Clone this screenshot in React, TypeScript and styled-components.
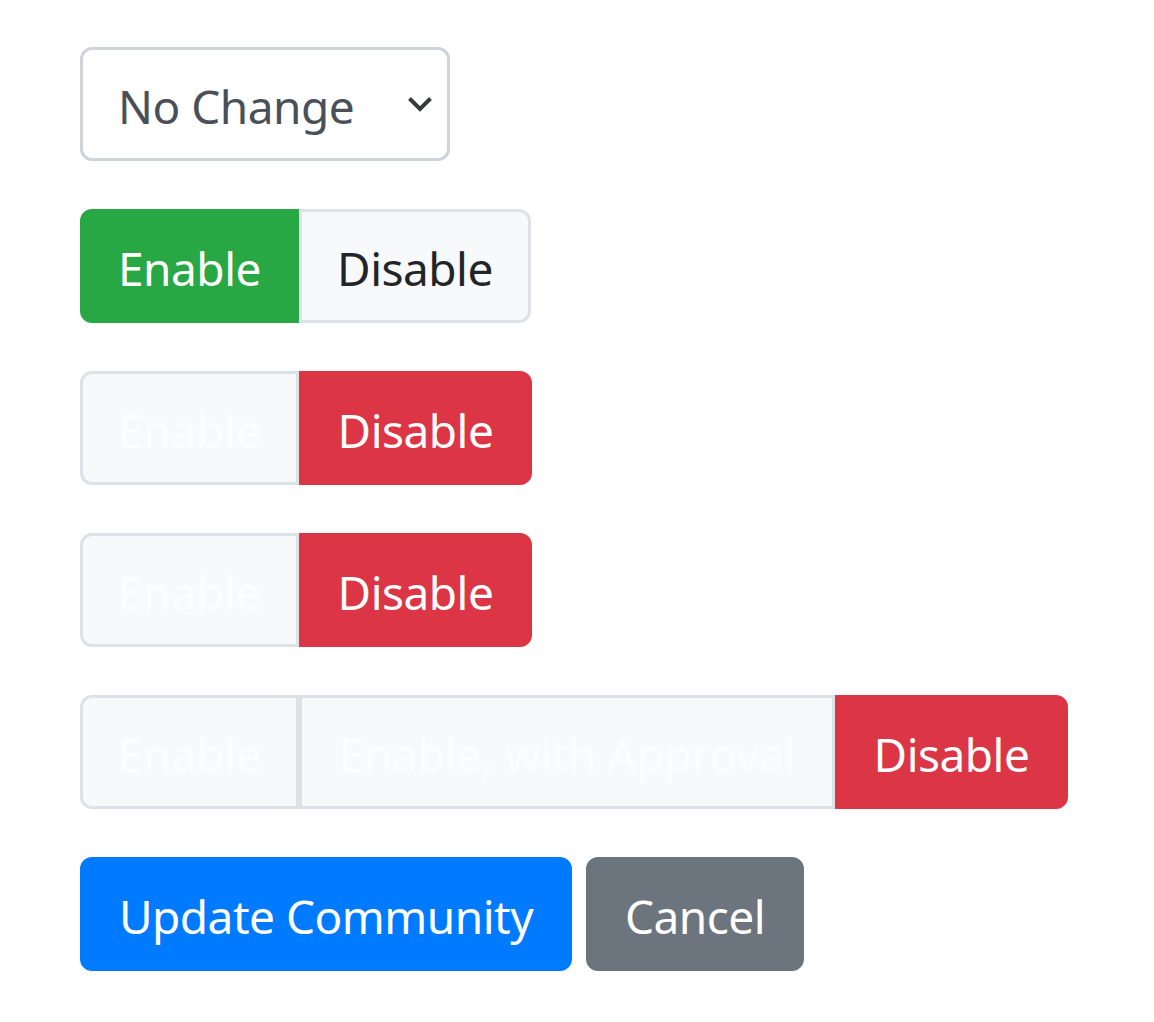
import React from 'react'
import styled, { createGlobalStyle, css } from 'styled-components'

const GlobalStyle = createGlobalStyle`
    html, body {
        margin: 0;
        padding: 0;
        background: #fff;
    }
    body {
        font-family: "Noto Sans", "Open Sans", sans-serif;
    }
`

type Variant = 'success' | 'danger' | 'primary' | 'secondary' | 'light' | 'faded'

const palette: Record<Variant, { bg: string; border: string; color: string }> = {
    success: { bg: '#28a745', border: '#28a745', color: '#fff' },
    danger: { bg: '#dc3545', border: '#dc3545', color: '#fff' },
    primary: { bg: '#007bff', border: '#007bff', color: '#fff' },
    secondary: { bg: '#6c757d', border: '#6c757d', color: '#fff' },
    light: { bg: '#f8f9fa', border: '#dee2e6', color: '#212529' },
    faded: { bg: '#f8f9fa', border: '#dee2e6', color: '#fdfdfe' },
}

const Page = styled.div`
    display: flex;
    flex-direction: column;
    align-items: flex-start;
    gap: 48px;
    padding: 47px 80px;
`

const SelectWrap = styled.div`
    position: relative;
    width: 370px;
`

const Select = styled.select`
    appearance: none;
    -webkit-appearance: none;
    width: 100%;
    height: 114px;
    box-sizing: border-box;
    padding: 4px 50px 0 35px;
    border: 3px solid #ced4da;
    border-radius: 12px;
    background: #fff;
    color: #495057;
    font-family: inherit;
    font-size: 46px;
    letter-spacing: -0.5px;
    line-height: 72px;
    outline: none;
`

const Chevron = styled.svg`
    position: absolute;
    right: 17px;
    top: 50%;
    transform: translateY(-50%);
    pointer-events: none;
`

const Group = styled.div`
    display: flex;
`

const Row = styled.div`
    display: flex;
    gap: 14px;
`

const Button = styled.button<{ $variant: Variant; $w: number; $pos?: 'first' | 'mid' | 'last' }>`
    box-sizing: border-box;
    width: ${(p) => p.$w}px;
    height: 114px;
    padding: 4px 0 0;
    font-family: inherit;
    font-size: 46px;
    letter-spacing: -0.5px;
    line-height: 72px;
    text-align: center;
    white-space: nowrap;
    cursor: pointer;
    border: 3px solid ${(p) => palette[p.$variant].border};
    background: ${(p) => palette[p.$variant].bg};
    color: ${(p) => palette[p.$variant].color};
    border-radius: 12px;
    ${(p) =>
        p.$pos === 'first' &&
        css`
            border-top-right-radius: 0;
            border-bottom-right-radius: 0;
        `}
    ${(p) =>
        p.$pos === 'mid' &&
        css`
            border-radius: 0;
        `}
    ${(p) =>
        p.$pos === 'last' &&
        css`
            border-top-left-radius: 0;
            border-bottom-left-radius: 0;
        `}
`

export default function App() {
    return (
        <>
            <GlobalStyle />
            <Page>
                <SelectWrap>
                    <Select defaultValue="none">
                        <option value="none">No Change</option>
                        <option value="enable">Enable</option>
                        <option value="disable">Disable</option>
                    </Select>
                    <Chevron width="26" height="16" viewBox="0 0 26 16">
                        <polyline points="2.5,2.5 13,13 23.5,2.5" fill="none" stroke="#343a40" strokeWidth="4" />
                    </Chevron>
                </SelectWrap>

                <Group>
                    <Button $variant="success" $w={219} $pos="first">Enable</Button>
                    <Button $variant="light" $w={232} $pos="last">Disable</Button>
                </Group>

                <Group>
                    <Button $variant="faded" $w={219} $pos="first">Enable</Button>
                    <Button $variant="danger" $w={233} $pos="last">Disable</Button>
                </Group>

                <Group>
                    <Button $variant="faded" $w={219} $pos="first">Enable</Button>
                    <Button $variant="danger" $w={233} $pos="last">Disable</Button>
                </Group>

                <Group>
                    <Button $variant="faded" $w={219} $pos="first">Enable</Button>
                    <Button $variant="faded" $w={536} $pos="mid">Enable, with Approval</Button>
                    <Button $variant="danger" $w={233} $pos="last">Disable</Button>
                </Group>

                <Row>
                    <Button $variant="primary" $w={492}>Update Community</Button>
                    <Button $variant="secondary" $w={218}>Cancel</Button>
                </Row>
            </Page>
        </>
    )
}
